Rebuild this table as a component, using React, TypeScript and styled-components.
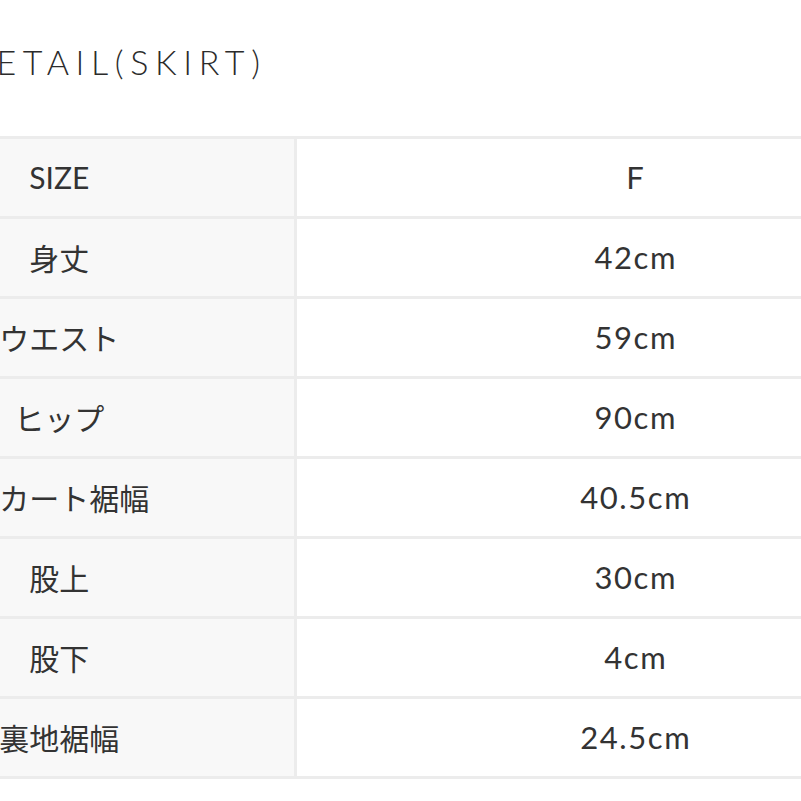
import React from "react";
import styled, { createGlobalStyle } from "styled-components";

const Global = createGlobalStyle`
  html, body {
    margin: 0;
    padding: 0;
    background: #ffffff;
    overflow: hidden;
  }
  body {
    font-family: "Lato", "Noto Sans CJK JP", sans-serif;
    color: #2b2b2b;
  }
`;

const Page = styled.div`
  width: 801px;
  height: 801px;
  overflow: hidden;
`;

const Shifted = styled.div`
  margin-left: -175px;
  width: 1150px;
  padding-top: 38px;
`;

const Title = styled.h2`
  margin: 0 0 0 139px;
  font-family: "Lato", "Noto Sans CJK JP", sans-serif;
  font-weight: 300;
  font-size: 34px;
  line-height: 48px;
  letter-spacing: 6.6px;
  color: #2b2b2b;
  height: 48px;
  white-space: nowrap;
`;

const Table = styled.table`
  margin-top: 50px;
  width: 1150px;
  border-collapse: collapse;
  table-layout: fixed;
  border-top: 3px solid #ececec;
`;

const Row = styled.tr`
  height: 80px;
  border-bottom: 3px solid #ececec;
`;

const LabelCell = styled.th`
  width: 470px;
  box-sizing: border-box;
  background: #f8f8f8;
  border-right: 3px solid #ececec;
  padding: 0 0 2px;
  text-align: center;
  vertical-align: middle;
  white-space: nowrap;
  font-family: "Lato", "Noto Sans CJK JP", sans-serif;
  font-weight: 400;
  font-size: 30px;
  color: #333333;
`;

const ValueCell = styled.td`
  padding: 0 0 2px;
  text-align: center;
  vertical-align: middle;
  font-family: "Lato", sans-serif;
  font-weight: 400;
  font-size: 31px;
  letter-spacing: 1.6px;
  color: #333333;
`;

const rows: [string, string][] = [
  ["SIZE", "F"],
  ["身丈", "42cm"],
  ["ウエスト", "59cm"],
  ["ヒップ", "90cm"],
  ["スカート裾幅", "40.5cm"],
  ["股上", "30cm"],
  ["股下", "4cm"],
  ["裏地裾幅", "24.5cm"],
];

export default function App() {
  return (
    <Page>
      <Global />
      <Shifted>
        <Title>DETAIL(SKIRT)</Title>
        <Table>
          <tbody>
            {rows.map(([label, value]) => (
              <Row key={label}>
                <LabelCell>{label}</LabelCell>
                <ValueCell>{value}</ValueCell>
              </Row>
            ))}
          </tbody>
        </Table>
      </Shifted>
    </Page>
  );
}
